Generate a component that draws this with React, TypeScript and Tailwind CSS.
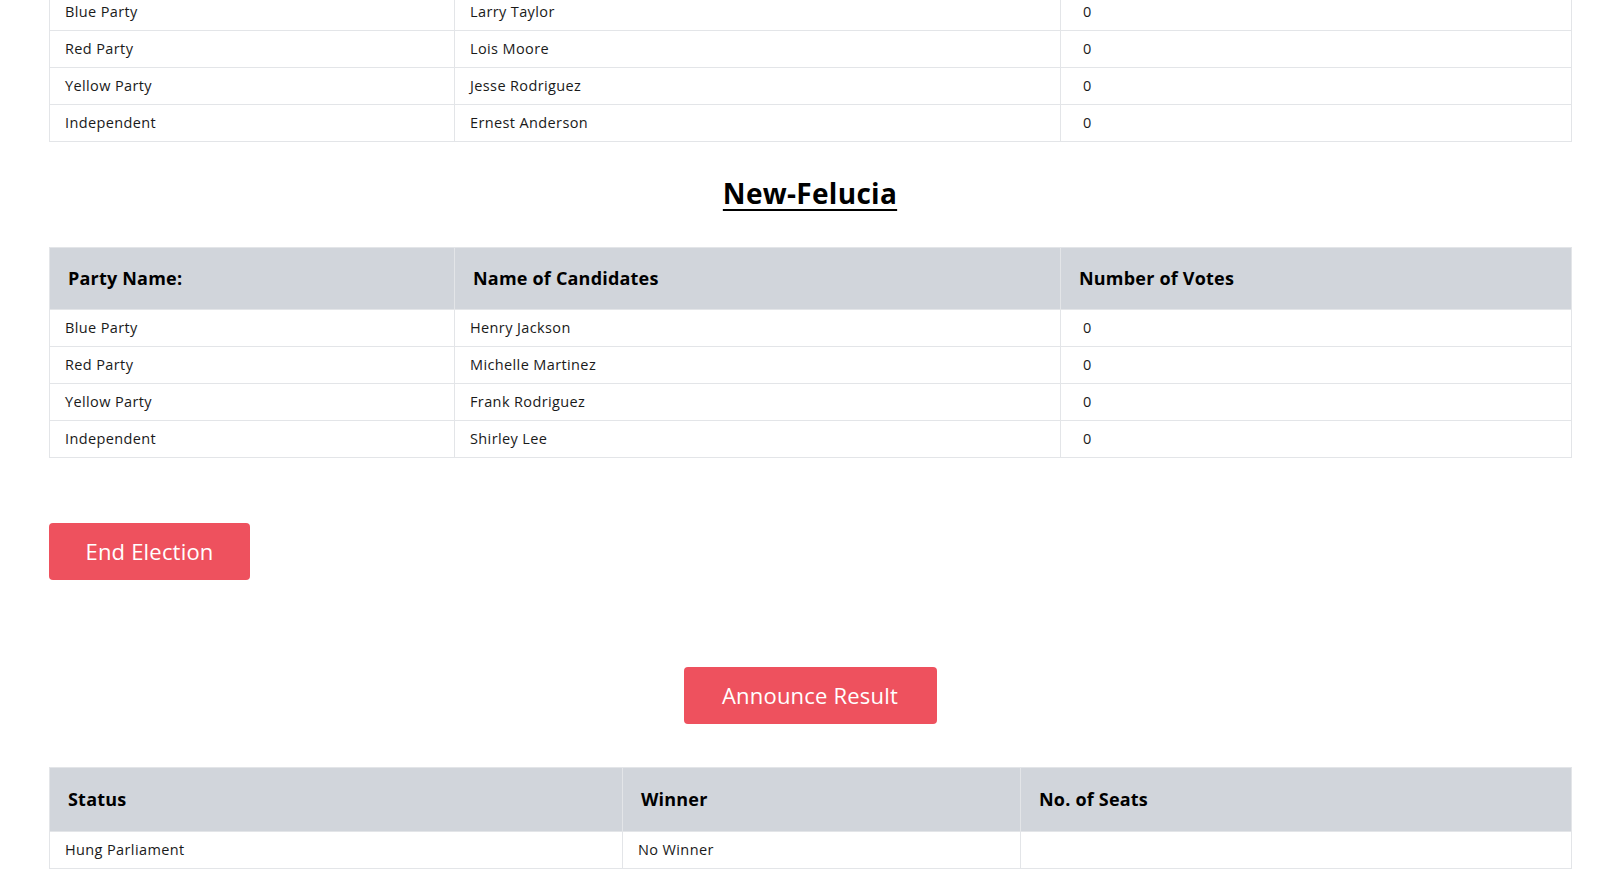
const votes = [
  { party: "Blue Party", name: "Larry Taylor", votes: 0 },
  { party: "Red Party", name: "Lois Moore", votes: 0 },
  { party: "Yellow Party", name: "Jesse Rodriguez", votes: 0 },
  { party: "Independent", name: "Ernest Anderson", votes: 0 },
];

const felucia = [
  { party: "Blue Party", name: "Henry Jackson", votes: 0 },
  { party: "Red Party", name: "Michelle Martinez", votes: 0 },
  { party: "Yellow Party", name: "Frank Rodriguez", votes: 0 },
  { party: "Independent", name: "Shirley Lee", votes: 0 },
];

type Row = { party: string; name: string; votes: number };

function Th({ children, w, tall = false }: { children: React.ReactNode; w: string; tall?: boolean }) {
  return (
    <th className={`${w} ${tall ? "leading-[25px]" : "leading-[23px]"} border border-[#e3e5e8] bg-[#d1d5db] px-[18px] py-[19px] text-left text-[18px] font-bold tracking-[0.2px] text-black`}>
      {children}
    </th>
  );
}

function Td({ children, className = "" }: { children?: React.ReactNode; className?: string }) {
  return (
    <td className={`border border-[#e3e5e8] px-[15px] py-2 text-[14.5px] leading-[20px] tracking-[0.38px] text-[#1a1a1a] ${className}`}>
      {children}
    </td>
  );
}

function VoteTable({ rows, header = true }: { rows: Row[]; header?: boolean }) {
  return (
    <table className="w-[1522px] table-fixed border-collapse">
      {header && (
        <thead>
          <tr>
            <Th w="w-[405px]">Party Name:</Th>
            <Th w="w-[606px]">Name of Candidates</Th>
            <Th w="w-[511px]">Number of Votes</Th>
          </tr>
        </thead>
      )}
      <tbody>
        {rows.map((r) => (
          <tr key={r.party}>
            <Td className={header ? "" : "w-[405px]"}>{r.party}</Td>
            <Td className={header ? "" : "w-[606px]"}>{r.name}</Td>
            <Td className={header ? "pl-[22px]" : "w-[511px] pl-[22px]"}>{r.votes}</Td>
          </tr>
        ))}
      </tbody>
    </table>
  );
}

export default function App() {
  return (
    <div className="min-h-screen bg-white pl-[49px]" style={{ fontFamily: "'Open Sans', 'Liberation Sans', sans-serif" }}>
      <div className="-mt-[7px]">
        <VoteTable rows={votes} header={false} />
      </div>

      <h2 className="mt-[30px] mb-[33px] w-[1522px] text-center text-[28px] font-bold leading-[42px] tracking-[0.3px] text-black underline decoration-2 underline-offset-[5px]">
        New-Felucia
      </h2>

      <VoteTable rows={felucia} />

      <button className="mt-[65px] h-[57px] w-[201px] rounded-[4px] bg-[#ee515e] text-[22px] tracking-[0.2px] text-white">
        End Election
      </button>

      <div className="mt-[87px] flex w-[1522px] justify-center">
        <button className="h-[57px] w-[253px] rounded-[4px] bg-[#ee515e] text-[22px] tracking-[0.2px] text-white">
          Announce Result
        </button>
      </div>

      <table className="mt-[43px] w-[1522px] table-fixed border-collapse">
        <thead>
          <tr>
            <Th w="w-[573px]" tall>Status</Th>
            <Th w="w-[398px]" tall>Winner</Th>
            <Th w="w-[551px]" tall>No. of Seats</Th>
          </tr>
        </thead>
        <tbody>
          <tr>
            <Td>Hung Parliament</Td>
            <Td>No Winner</Td>
            <Td></Td>
          </tr>
        </tbody>
      </table>
    </div>
  );
}
